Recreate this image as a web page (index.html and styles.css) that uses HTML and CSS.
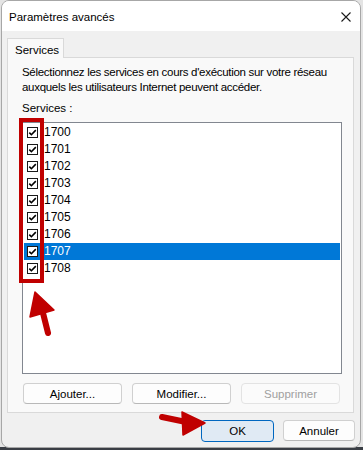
FILE: index.html
```html
<!DOCTYPE html>
<html lang="fr">
<head>
  <meta charset="UTF-8">
  <meta name="viewport" content="width=device-width, initial-scale=1.0"/>
  <title>Paramètres avancés</title>
  <link rel="stylesheet" href="styles.css">
</head>
<body>

  <div class="window">
    <div class="titlebar">
      <span class="title">Paramètres avancés</span>
      <svg class="close" width="10" height="10" viewBox="0 0 10 10">
        <path d="M0.5 0.5 L9.5 9.5 M9.5 0.5 L0.5 9.5" stroke="#1a1a1a" stroke-width="1.1" fill="none"/>
      </svg>
    </div>

    <div class="content">
      <div class="tabs">
        <div class="tab">Services</div>
      </div>

      <div class="panel">
        <p class="intro">Sélectionnez les services en cours d'exécution sur votre réseau<br>auxquels les utilisateurs Internet peuvent accéder.</p>
        <div class="label">Services :</div>

        <div class="listbox">
          <div class="row"><span class="check"></span><span>1700</span></div>
          <div class="row"><span class="check"></span><span>1701</span></div>
          <div class="row"><span class="check"></span><span>1702</span></div>
          <div class="row"><span class="check"></span><span>1703</span></div>
          <div class="row"><span class="check"></span><span>1704</span></div>
          <div class="row"><span class="check"></span><span>1705</span></div>
          <div class="row"><span class="check"></span><span>1706</span></div>
          <div class="row selected"><span class="check"></span><span>1707</span></div>
          <div class="row"><span class="check"></span><span>1708</span></div>
        </div>

        <div class="actions">
          <button class="btn">Ajouter...</button>
          <button class="btn">Modifier...</button>
          <button class="btn" disabled>Supprimer</button>
        </div>
      </div>

      <div class="footer">
        <button class="btn btn-ok">OK</button>
        <button class="btn btn-cancel">Annuler</button>
      </div>
    </div>

    <!-- annotations drawn over the dialog -->
    <svg class="marks" width="363" height="450" viewBox="0 0 363 450">
      <rect x="21" y="120" width="21" height="161" fill="none" stroke="#c00000" stroke-width="4"/>
      <line x1="43" y1="313" x2="48" y2="333" stroke="#c00000" stroke-width="6" stroke-linecap="round"/>
      <polygon points="35,292 30,317 54,310" fill="#c00000" stroke="#c00000" stroke-width="1.5" stroke-linejoin="round"/>
      <line x1="162" y1="417" x2="186" y2="422" stroke="#c00000" stroke-width="6" stroke-linecap="round"/>
      <polygon points="182,412 205,423 183,435" fill="#c00000" stroke="#c00000" stroke-width="1.5" stroke-linejoin="round"/>
    </svg>
  </div>

</body>
</html>
```

FILE: styles.css
```css
* {
  margin: 0;
  padding: 0;
  box-sizing: border-box;
}

body {
  width: 363px;
  height: 450px;
  overflow: hidden;
  font-family: "Liberation Sans", Arial, sans-serif;
  font-size: 11.5px;
  color: #000;
  background: linear-gradient(#e4e4e4 447px, #3a3e45 447px);
}

.window {
  position: relative;
  width: 360px;
  height: 448px;
  margin-left: 1px;
  border: 1px solid #a7a7a7;
  border-radius: 8px;
  background: #f0f0f0;
  overflow: hidden;
}

.titlebar {
  height: 30px;
  background: #fff;
  display: flex;
  align-items: center;
  justify-content: space-between;
  padding: 0 8px 0 7px;
}

.title {
  margin-top: 1px;
}

.close {
  margin-right: 1px;
  margin-top: 1px;
}

.content {
  padding: 7px 0 0 5px;
}

.tabs {
  display: flex;
}

.tab {
  position: relative;
  z-index: 1;
  width: 57px;
  height: 20px;
  padding: 4px 0 0 7px;
  border: 1px solid #d9d9d9;
  border-bottom: none;
  margin-bottom: -1px;
  background: #f9f9f9;
  line-height: 14px;
}

.panel {
  width: 347px;
  height: 356px;
  border: 1px solid #d9d9d9;
  background: #f9f9f9;
  padding: 7px 0 0 14px;
}

.intro {
  line-height: 15px;
  white-space: nowrap;
  letter-spacing: -0.3px;
}

.label {
  line-height: 15px;
  margin-top: 6px;
}

.listbox {
  width: 320px;
  height: 252px;
  margin-top: 6px;
  border: 1px solid #828790;
  background: #fff;
  padding-top: 1px;
}

.row {
  display: flex;
  align-items: center;
  height: 17px;
  margin: 0 1px;
  line-height: 17px;
  font-size: 12px;
}

.row.selected {
  background: #0078d7;
  color: #fff;
}

.check {
  width: 11px;
  height: 11px;
  margin: 0 6px 0 3px;
  border: 1px solid #1a1a1a;
  background: #fff url("data:image/svg+xml,%3Csvg xmlns='http://www.w3.org/2000/svg' width='9' height='9' viewBox='0 0 9 9'%3E%3Cpath d='M1.3 4.6 L3.4 6.7 L7.8 2.1' stroke='%23000' stroke-width='1.6' fill='none'/%3E%3C/svg%3E") center no-repeat;
}

.actions {
  display: flex;
  gap: 10px;
  margin-top: 9px;
  padding-left: 1px;
}

.btn {
  height: 21px;
  width: 99px;
  border: 1px solid #d0d0d0;
  border-bottom-color: #b8b8b8;
  border-radius: 4px;
  background: #fdfdfd;
  font-family: "Liberation Sans", Arial, sans-serif;
  font-size: 11.5px;
  color: #000;
}

.btn:disabled {
  color: #a0a0a0;
  border-color: #e3e3e3;
  background: #fbfbfb;
}

.footer {
  display: flex;
  justify-content: flex-end;
  gap: 9px;
  padding: 7px 5px 0 0;
}

.btn-ok {
  width: 73px;
  height: 22px;
  border: 1px solid #0067c0;
  background: #e0eaf4;
}

.btn-cancel {
  width: 72px;
}

.marks {
  position: absolute;
  left: -2px;
  top: -1px;
  pointer-events: none;
}
```
